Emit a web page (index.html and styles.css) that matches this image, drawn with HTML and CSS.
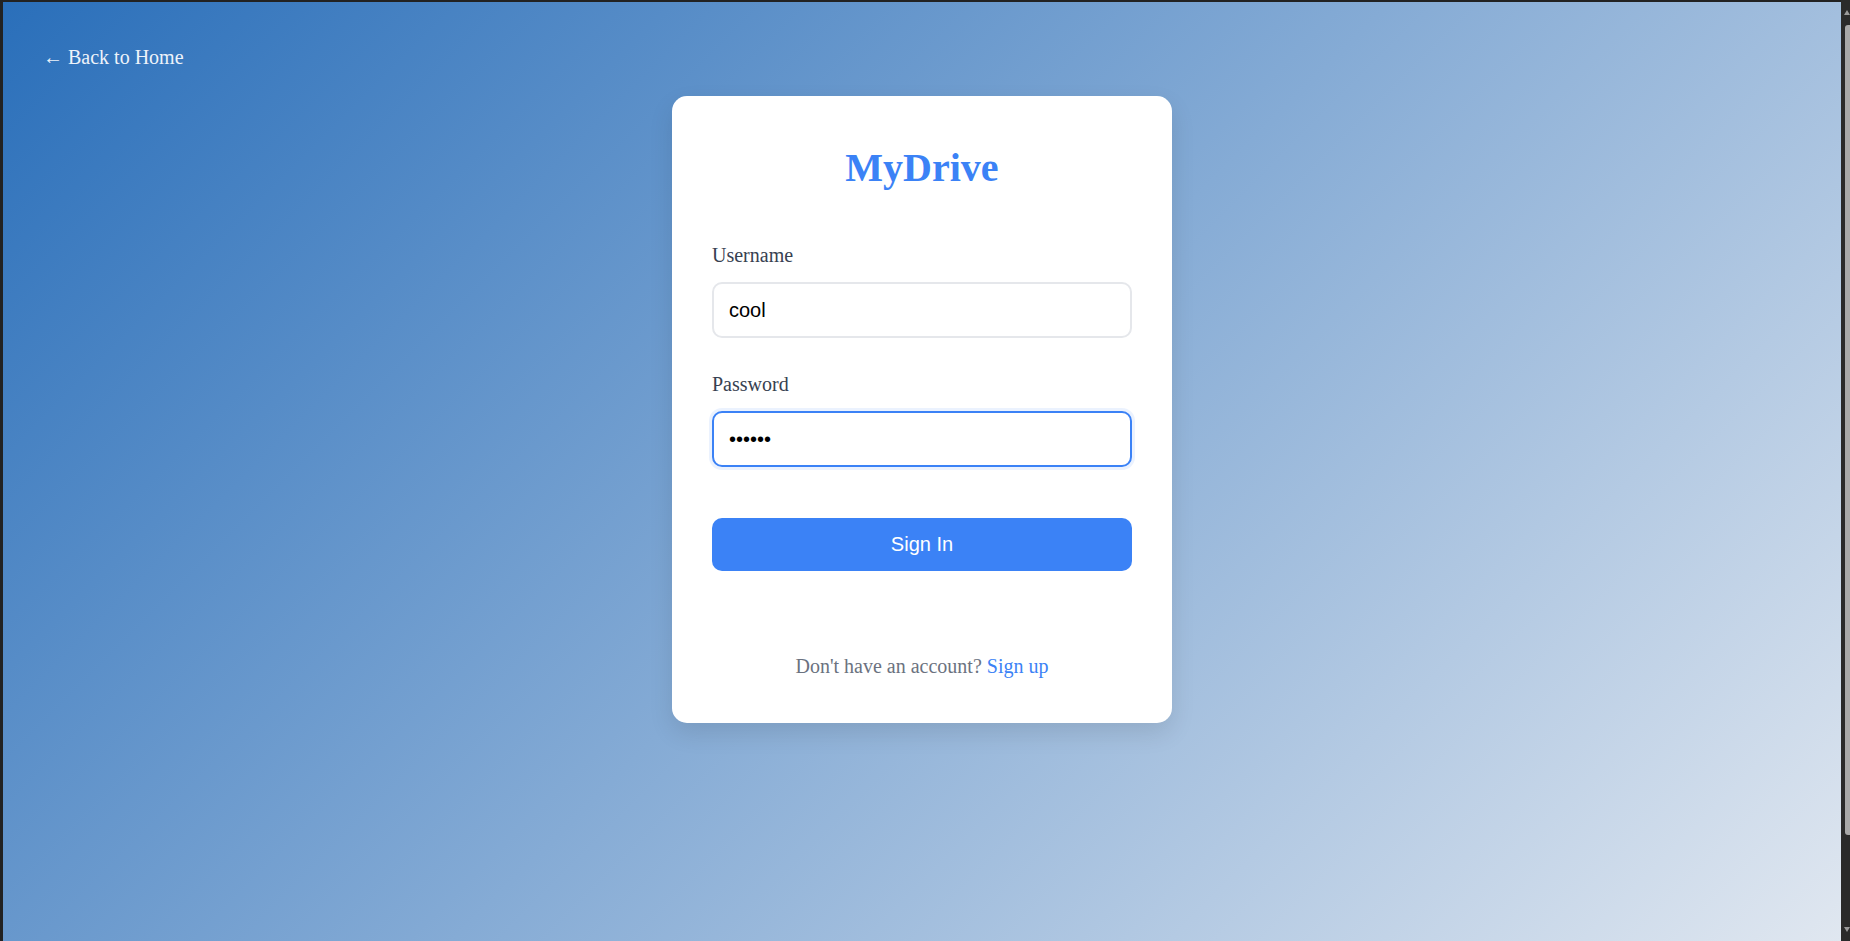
FILE: index.html
```html
<!DOCTYPE html>
<html lang="en">
<head>
<meta charset="utf-8">
<title>MyDrive - Sign In</title>
<link rel="stylesheet" href="styles.css">
</head>
<body>
<div class="screen">
  <main class="page">
    <a class="back" href="#">← Back to Home</a>
    <div class="card">
      <h1 class="title">MyDrive</h1>
      <form class="form">
        <label class="label" for="username">Username</label>
        <input class="input" id="username" type="text" value="cool">
        <label class="label label-second" for="password">Password</label>
        <input class="input input-focused" id="password" type="password" value="secret">
        <button class="button" type="button">Sign In</button>
      </form>
      <p class="footer">Don't have an account? <a class="link" href="#">Sign up</a></p>
    </div>
  </main>
  <div class="scrollbar">
    <span class="arrow arrow-up"></span>
    <div class="thumb"></div>
    <span class="arrow arrow-down"></span>
  </div>
</div>
</body>
</html>
```
FILE: styles.css
```css
html, body {
  margin: 0;
  padding: 0;
  height: 100%;
  overflow: hidden;
}
body {
  background: #222222;
}
.screen {
  display: flex;
  height: 941px;
  padding: 2px 0 0 3px;
  box-sizing: border-box;
}
.page {
  flex: 1;
  display: flex;
  flex-direction: column;
  align-items: center;
  background: linear-gradient(135deg, #2a6fba 0%, #e0e7f0 100%);
  padding-top: 43px;
  box-sizing: border-box;
}
.back {
  align-self: flex-start;
  margin-left: 40px;
  font-family: "Liberation Serif", "DejaVu Serif", serif;
  font-size: 20px;
  line-height: 24px;
  color: #eef3fa;
  text-decoration: none;
}
.card {
  margin-top: 27px;
  width: 500px;
  box-sizing: border-box;
  background: #ffffff;
  border-radius: 15px;
  padding: 40px 40px 45px;
  box-shadow: 0 10px 25px rgba(0, 0, 0, 0.1);
}
.title {
  margin: 8px 0 0;
  font-family: "Liberation Serif", serif;
  font-weight: bold;
  font-size: 40px;
  line-height: 48px;
  color: #3b82f6;
  text-align: center;
}
.form {
  display: flex;
  flex-direction: column;
  margin: 51px 0 0;
}
.label {
  font-family: "Liberation Serif", serif;
  font-size: 20px;
  line-height: 24px;
  color: #374151;
  margin-bottom: 15px;
}
.label-second {
  margin-top: 34px;
}
.input {
  height: 56px;
  box-sizing: border-box;
  border: 2px solid #e5e7eb;
  border-radius: 10px;
  padding: 0 15px;
  font-family: "Liberation Sans", Arial, sans-serif;
  font-size: 20px;
  color: #000000;
  background: #ffffff;
  outline: none;
  margin: 0;
}
.input-focused {
  border-color: #3b82f6;
  box-shadow: 0 0 0 3px rgba(59, 130, 246, 0.1);
}
.button {
  margin-top: 51px;
  height: 53px;
  border: none;
  border-radius: 10px;
  background: #3b82f6;
  color: #ffffff;
  font-family: "Liberation Sans", Arial, sans-serif;
  font-size: 20px;
  padding: 0;
  cursor: pointer;
}
.footer {
  margin: 83px 0 0;
  font-family: "Liberation Serif", serif;
  font-size: 20px;
  line-height: 24px;
  color: #6b7280;
  text-align: center;
}
.link {
  color: #3b82f6;
  text-decoration: none;
}
.scrollbar {
  width: 9px;
  background: #2a2a2a;
  display: flex;
  flex-direction: column;
  align-items: flex-end;
  margin-top: -2px;
}
.arrow {
  display: block;
  width: 0;
  height: 0;
  border-left: 3px solid transparent;
  border-right: 3px solid transparent;
}
.arrow-up {
  margin-top: 10px;
  border-bottom: 5px solid #9a9a9a;
}
.arrow-down {
  margin-top: auto;
  margin-bottom: 9px;
  border-top: 5px solid #9a9a9a;
}
.thumb {
  margin-top: 10px;
  width: 5px;
  height: 810px;
  background: #a8a8a8;
  border-radius: 3px 0 0 3px;
}
```
